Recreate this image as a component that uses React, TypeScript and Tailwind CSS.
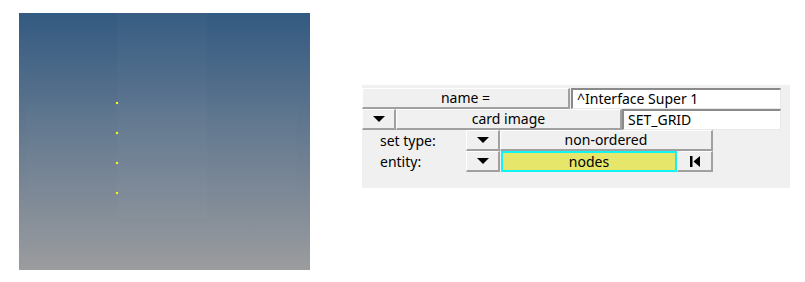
import React from "react";

const btn =
  "flex items-center justify-center bg-[#f0f0f0] border-t border-l border-t-white border-l-white border-b-2 border-r-2 border-b-[#a0a0a0] border-r-[#a0a0a0] box-border";

const field =
  "flex items-center bg-white border-t-2 border-l-2 border-t-[#8a8a8a] border-l-[#8a8a8a] border-b border-r border-b-[#e8e8e8] border-r-[#e8e8e8] pl-[4px] box-border";

function Tri() {
  return (
    <svg width="12" height="7" viewBox="0 0 12 7">
      <polygon points="0,0 12,0 6,6" fill="#000" />
    </svg>
  );
}

export default function App() {
  return (
    <div
      className="w-[805px] h-[282px] bg-white flex text-black text-[14px] leading-none"
      style={{ fontFamily: '"Noto Sans", "Open Sans", sans-serif' }}
    >
      <div className="ml-[19px] mt-[13px] w-[291px] h-[257px] relative bg-gradient-to-b from-[#335a81] to-[#9b9c9e] overflow-hidden">
        <div className="absolute left-[98px] top-0 w-[90px] h-[205px] bg-white/[0.02]" />
        <div className="absolute left-[8px] top-[90px] w-[270px] h-[90px] bg-white/[0.015]" />
        <div className="absolute left-[97px] top-[89px] w-[2px] h-[2px] bg-[#f4f430] shadow-[0_0_1px_rgba(255,255,0,0.7)]" />
        <div className="absolute left-[97px] top-[119px] w-[2px] h-[2px] bg-[#f4f430] shadow-[0_0_1px_rgba(255,255,0,0.7)]" />
        <div className="absolute left-[97px] top-[149px] w-[2px] h-[2px] bg-[#f4f430] shadow-[0_0_1px_rgba(255,255,0,0.7)]" />
        <div className="absolute left-[97px] top-[179px] w-[2px] h-[2px] bg-[#f4f430] shadow-[0_0_1px_rgba(255,255,0,0.7)]" />
      </div>

      <div className="ml-[52px] mt-[85px] w-[428px] h-[103px] bg-[#f0f0f0] flex flex-col pt-[3px]">
        <div className="flex h-[21px]">
          <div className={`${btn} w-[208px]`}>name =</div>
          <div className={`${field} ml-[1px] w-[210px]`}>^Interface Super 1</div>
        </div>
        <div className="flex h-[21px]">
          <div className={`${btn} w-[34px]`}>
            <Tri />
          </div>
          <div className={`${btn} w-[226px]`}>card image</div>
          <div className={`${field} w-[159px]`}>SET_GRID</div>
        </div>
        <div className="flex h-[21px]">
          <div className="w-[104px] pl-[18px] flex items-center">set type:</div>
          <div className={`${btn} w-[34px]`}>
            <Tri />
          </div>
          <div className={`${btn} w-[213px]`}>non-ordered</div>
        </div>
        <div className="flex h-[21px]">
          <div className="w-[104px] pl-[18px] flex items-center">entity:</div>
          <div className={`${btn} w-[34px]`}>
            <Tri />
          </div>
          <div className="flex items-center justify-center w-[176px] ml-[1px] bg-[#e6e66a] shadow-[inset_0_0_0_2px_#10f4f4]">
            nodes
          </div>
          <div className={`${btn} w-[36px]`}>
            <svg width="12" height="11" viewBox="0 0 12 11">
              <rect x="1" y="0" width="2.5" height="11" fill="#000" />
              <polygon points="11,0 11,11 4.5,5.5" fill="#000" />
            </svg>
          </div>
        </div>
      </div>
    </div>
  );
}
